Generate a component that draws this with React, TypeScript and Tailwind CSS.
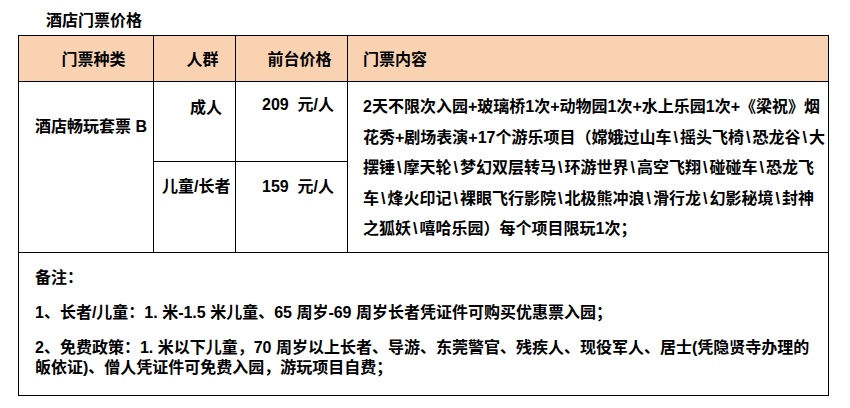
import React from "react";

const font = { fontFamily: '"Liberation Sans", "Noto Sans CJK SC", sans-serif' };

function Line({ text }: { text: string }) {
  const parts = text.split("\\");
  return (
    <div>
      {parts.map((p, i) => (
        <React.Fragment key={i}>
          {i > 0 && <span className="inline-block w-[8.5px] text-center">\</span>}
          {p}
        </React.Fragment>
      ))}
    </div>
  );
}

export default function App() {
  const lines = [
    "2天不限次入园+玻璃桥1次+动物园1次+水上乐园1次+《梁祝》烟",
    "花秀+剧场表演+17个游乐项目（嫦娥过山车\\摇头飞椅\\恐龙谷\\大",
    "摆锤\\摩天轮\\梦幻双层转马\\环游世界\\高空飞翔\\碰碰车\\恐龙飞",
    "车\\烽火印记\\裸眼飞行影院\\北极熊冲浪\\滑行龙\\幻影秘境\\封神",
    "之狐妖\\嘻哈乐园）每个项目限玩1次；",
  ];
  return (
    <div
      className="w-[850px] h-[408px] bg-white text-black font-bold text-[16px] pt-[11px]"
      style={font}
    >
      <div className="pl-[46px] leading-[20px] text-[16px]">酒店门票价格</div>
      <div className="mt-[4px] ml-[18px] w-[811px] border-l border-t border-black grid grid-cols-[135px_82px_112px_481px] grid-rows-[46px_80px_91px_143px]">
        {/* header */}
        <div className="bg-[#f9d2b2] border-r border-b border-black flex items-center justify-center pl-[15px] pt-[2px]">
          门票种类
        </div>
        <div className="bg-[#f9d2b2] border-r border-b border-black flex items-center justify-center pl-[16px] pt-[2px]">
          人群
        </div>
        <div className="bg-[#f9d2b2] border-r border-b border-black flex items-center justify-center pl-[16px] pt-[2px]">
          前台价格
        </div>
        <div className="bg-[#f9d2b2] border-r border-b border-black flex items-center pl-[15px] pt-[2px]">
          门票内容
        </div>

        {/* body */}
        <div className="row-span-2 border-r border-b border-black pl-[16px] pt-[35px] leading-[20px]">
          酒店畅玩套票&nbsp;B
        </div>
        <div className="border-r border-b border-black pl-[36px] pt-[16px] leading-[20px]">成人</div>
        <div className="border-r border-b border-black pl-[26px] pt-[13px] leading-[20px] whitespace-pre">209  元/人</div>
        <div className="row-span-2 border-r border-b border-black pl-[15px] pt-[10px] leading-[30.5px] whitespace-nowrap">
          {lines.map((l, i) => (
            <Line key={i} text={l} />
          ))}
        </div>
        <div className="border-r border-b border-black pl-[8px] pt-[15px] leading-[20px]">儿童/长者</div>
        <div className="border-r border-b border-black pl-[26px] pt-[15px] leading-[20px] whitespace-pre">159  元/人</div>

        {/* notes */}
        <div className="col-span-4 border-r border-b border-black pl-[16px] pt-[15px] leading-[20px]">
          <div>备注：</div>
          <div className="mt-[15px] whitespace-pre">1、长者/儿童：1. 米-1.5 米儿童、65 周岁-69 周岁长者凭证件可购买优惠票入园；</div>
          <div className="mt-[15px] whitespace-pre">
            2、免费政策：1. 米以下儿童，70 周岁以上长者、导游、东莞警官、残疾人、现役军人、居士(凭隐贤寺办理的
            <br />
            皈依证)、僧人凭证件可免费入园，游玩项目自费；
          </div>
        </div>
      </div>
    </div>
  );
}
